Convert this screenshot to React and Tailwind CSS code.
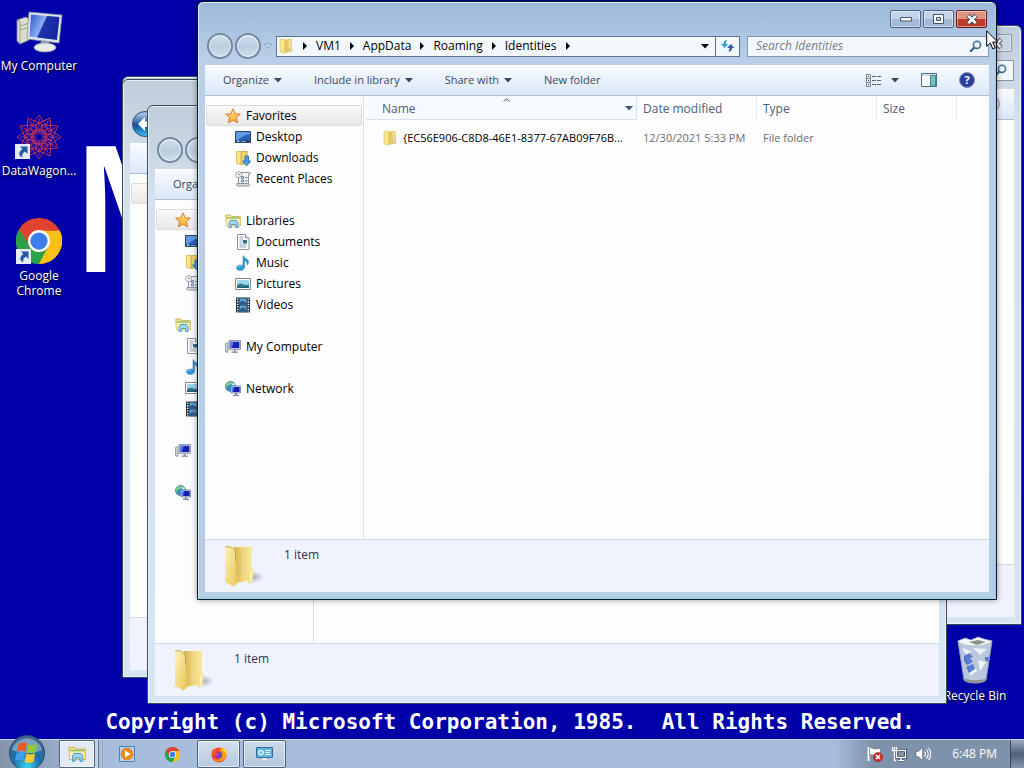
import clsx from 'clsx'

function StarIcon() {
  return (
    <svg width="16" height="16" viewBox="0 0 16 16">
      <defs>
        <linearGradient id="star" x1="0" y1="0" x2="0" y2="1">
          <stop offset="0" stopColor="#ffe9a0" />
          <stop offset="1" stopColor="#f9a51c" />
        </linearGradient>
      </defs>
      <path d="M8 .8l2.100 4.900 5.300.5-4 3.400 1.200 5.200L8 12l-4.600 2.800 1.200-5.200-4-3.400 5.300-.5z" fill="url(#star)" stroke="#d9792b" strokeWidth="1" strokeLinejoin="round" />
    </svg>
  )
}

function DesktopIcon() {
  return (
    <svg width="16" height="16" viewBox="0 0 16 16">
      <path d="M.5 2.500h15v11H.5z" fill="#2a62b4" stroke="#2b4468" />
      <path d="M1 3h14v2C9 6 5 9 1 12z" fill="#5f9be0" />
      <path d="M1 11.500h14V13H1z" fill="#1c3766" />
      <path d="M2 11.500h2.500V13H2zM6 12h5v.7H6z" fill="#8fd0f5" />
    </svg>
  )
}

function FolderIcon({ size = 16 }) {
  return (
    <svg width={size} height={size} viewBox="0 0 16 16">
      <path d="M2 1.200h5l.5 13.300L6 15l-4-1.300z" fill="#f7e58e" stroke="#dcc35d" strokeWidth=".6" />
      <path d="M7.300 2.300l5-.8.7 11.800-6 1z" fill="#e6c961" stroke="#cfae45" strokeWidth=".6" />
      <path d="M9.500 1.600l4 .2.400 11.700-2.800.4z" fill="#f5df84" stroke="#d8bb55" strokeWidth=".5" />
      <path d="M12 9.500h1.300v3.600H12z" fill="#b9d7c2" />
    </svg>
  )
}

function DownloadsIcon() {
  return (
    <svg width="16" height="16" viewBox="0 0 16 16">
      <path d="M1.500 1.500h4.700v13l-4.700-1z" fill="#f8e592" stroke="#d4b047" strokeWidth=".8" />
      <path d="M6.200 1.500h6v12l-6 1z" fill="#f0d06c" stroke="#c9a33c" strokeWidth=".8" />
      <path d="M10 6h3.500v5h2.300L11.700 15.800 7.600 11H10z" fill="#3da2ea" stroke="#1f65ad" strokeWidth=".8" />
    </svg>
  )
}

function RecentIcon() {
  return (
    <svg width="16" height="16" viewBox="0 0 16 16">
      <path d="M5 1.500h10v2H13.500v9H3.500v-8" fill="#f2f4f6" stroke="#8d96a0" />
      <path d="M2 12.500h11.500c1.500 0 1.500 2.500 0 2.500H3c-1.500 0-2-1.500-1-2.500z" fill="#d4d9de" stroke="#8d96a0" />
      <path d="M6.500 5.500h2v2h-2zM6.500 9h2v2h-2zM10 6.500h2.500M10 10h2.500" fill="none" stroke="#6f8197" />
      <circle cx="3.600" cy="3.600" r="3" fill="#fafbfc" stroke="#98a0a8" />
      <path d="M3.600 2v1.800H5" fill="none" stroke="#6a737d" strokeWidth=".8" />
    </svg>
  )
}

function LibraryIcon({ size = 16 }) {
  return (
    <svg width={size} height={size} viewBox="0 0 16 16">
      <path d="M.7 2h5l1 1.500h8.600v9.500H1.500z" fill="#f4df86" stroke="#c9a94a" strokeWidth=".8" />
      <path d="M2 5h12.500" stroke="#5ebd7d" strokeWidth="1" />
      <path d="M1.500 6h13v6.500h-13z" fill="#fbf0b5" />
      <path d="M4 14.500V10l1.500-2.500h6L13 10v4.500h-2.300V11.500H6.300v3z" fill="#9bd6f3" stroke="#3c8fc2" strokeWidth=".8" />
    </svg>
  )
}

function DocumentsIcon() {
  return (
    <svg width="16" height="16" viewBox="0 0 16 16">
      <path d="M2.500.5h8L14 4v11.500H2.500z" fill="#fff" stroke="#8a939c" />
      <path d="M10.500.5V4H14" fill="#e8edf2" stroke="#8a939c" />
      <path d="M4.500 3h4M4.500 5h4M4.500 7h3M4.500 9h2.500M4.500 11h7M4.500 13h7" stroke="#8fa5bd" />
      <path d="M8 6h4v3.500H8z" fill="#2c6f8e" />
    </svg>
  )
}

function MusicIcon() {
  return (
    <svg width="16" height="16" viewBox="0 0 16 16">
      <path d="M8 .5c.5 2.500 5.500 3 5.500 6.500 0 1.500-.8 2.500-1.500 3 .5-2.500-.8-3.800-2.500-4.300V12c0 2-1.800 3.500-4.200 3.500S1.500 14.300 1.500 12.800 3.200 10 5.300 10c1 0 1.900.2 2.700.6z" fill="#2e9bd6" stroke="#1b76ae" strokeWidth=".5" />
      <path d="M3 12.200c.5-1 2-1.400 3-1.200" stroke="#a5dcf6" fill="none" />
    </svg>
  )
}

function PicturesIcon() {
  return (
    <svg width="16" height="16" viewBox="0 0 16 16">
      <path d="M.5 2.500h15v11H.5z" fill="#fff" stroke="#7d8893" />
      <path d="M2 4h12v8H2z" fill="#9fd4ee" />
      <path d="M2 9c3-2 5-1.500 7-.5s3.500.5 5-.5v4H2z" fill="#2f7f88" />
      <path d="M2 10.500h12V12H2z" fill="#1f5d86" />
    </svg>
  )
}

function VideosIcon() {
  return (
    <svg width="16" height="16" viewBox="0 0 16 16">
      <path d="M1 .5h14v15H1z" fill="#22303e" />
      <path d="M4.500 1.500h7v6h-7zM4.500 8.500h7v6h-7z" fill="#5aa9d8" />
      <path d="M4.500 5.500l3-2 4 3v1h-7zM4.500 12.500l4-2.500 3 3v1.500h-7z" fill="#2b5a94" />
      <path d="M8.500 4.500l2 1M7.500 11.500l2 1" stroke="#b04a4a" />
      <path d="M2.700 1.500v14M13.300 1.500v14" stroke="#fff" strokeWidth="1.500" strokeDasharray="1.300 1.300" />
    </svg>
  )
}

function ComputerIcon() {
  return (
    <svg width="16" height="16" viewBox="0 0 16 16">
      <path d="M.5 4.500l2.500-1v10l-2.500-.8z" fill="#cfd5d6" stroke="#7e888c" strokeWidth=".7" />
      <path d="M4 1.500h11.500v8.800H4z" fill="#c7cfe2" stroke="#7a85a5" strokeWidth=".8" />
      <path d="M5.300 2.800h9v6.200h-9z" fill="#1722b8" />
      <path d="M5.300 2.800h3.500l-2 6.200H5.300z" fill="#5f79ea" />
      <path d="M8.500 10.500h2.500v2H13v1.500H6.500v-1.500h2z" fill="#9aa3ad" />
    </svg>
  )
}

function NetworkIcon() {
  return (
    <svg width="16" height="16" viewBox="0 0 16 16">
      <circle cx="5.500" cy="5.500" r="5" fill="#2f93cc" stroke="#1f6a9c" strokeWidth=".6" />
      <path d="M1.500 3c2-2 4-2.500 6-1.500C6.500 3 6 4 3.500 4.500S2 7 2.500 8C1 7 .5 5 1.500 3z" fill="#7ed07a" />
      <path d="M6.500 2.500c1.500-.5 3 0 3.500 1.500L7.500 4.500z" fill="#e1f6ff" />
      <path d="M6 5h9.500v7H6z" fill="#c7d5ee" stroke="#5d6f9c" strokeWidth=".7" />
      <path d="M7 6h7.600v5H7z" fill="#1420ad" />
      <path d="M7 6h2.500L8 11H7z" fill="#5877e6" />
      <path d="M10 12h1.800v1.800H14V15H8v-1.200h2z" fill="#7f8a97" />
    </svg>
  )
}

function LargeFolder() {
  return (
    <svg width="42" height="44" viewBox="0 0 42 44">
      <defs>
        <linearGradient id="folderBack" x1="0" y1="0" x2="1" y2="0">
          <stop offset="0" stopColor="#d2ae48" />
          <stop offset=".4" stopColor="#edd27b" />
          <stop offset="1" stopColor="#f8e89c" />
        </linearGradient>
        <linearGradient id="folderFront" x1="0" y1="0" x2="1" y2="1">
          <stop offset="0" stopColor="#fdf3b8" />
          <stop offset="1" stopColor="#e9c65a" />
        </linearGradient>
        <radialGradient id="folderShade">
          <stop offset="0" stopColor="#8492a5" stopOpacity=".7" />
          <stop offset="1" stopColor="#8492a5" stopOpacity="0" />
        </radialGradient>
      </defs>
      <ellipse cx="31" cy="33" rx="11" ry="6" fill="url(#folderShade)" />
      <path d="M12 3h18v33l-16 3z" fill="url(#folderBack)" />
      <path d="M18 3v34" stroke="#dfc161" />
      <path d="M3 2.500C7 1 12 3 13.500 8l1 32-3 2.500L3 38z" fill="url(#folderFront)" />
      <path d="M3 3c5-1 9 1 10.500 5v9" fill="none" stroke="#b79a48" strokeWidth=".8" />
      <path d="M27 28l3-3 1.500 3-1 10-4 1z" fill="#fff0ae" stroke="#e6cb6c" strokeWidth=".6" />
    </svg>
  )
}

function Triangle({ right, className }) {
  return (
    <svg width="8" height="8" viewBox="0 0 8 8" className={className} fill="currentColor">
      {right ? <path d="M2 0l4 4-4 4z" /> : <path d="M0 2h8L4 6.500z" />}
    </svg>
  )
}

function SearchIcon() {
  return (
    <svg width="13" height="13" viewBox="0 0 13 13" fill="none">
      <circle cx="8" cy="4.800" r="3.600" fill="#e9f5fc" stroke="#3f7096" strokeWidth="1.600" />
      <path d="M5.300 7.500L1.200 11.800" stroke="#2f6593" strokeWidth="2.200" />
    </svg>
  )
}

const navGroups = [
  {
    title: 'Favorites',
    icon: StarIcon,
    items: [
      { label: 'Desktop', icon: DesktopIcon },
      { label: 'Downloads', icon: DownloadsIcon },
      { label: 'Recent Places', icon: RecentIcon },
    ],
  },
  {
    title: 'Libraries',
    icon: LibraryIcon,
    items: [
      { label: 'Documents', icon: DocumentsIcon },
      { label: 'Music', icon: MusicIcon },
      { label: 'Pictures', icon: PicturesIcon },
      { label: 'Videos', icon: VideosIcon },
    ],
  },
  { title: 'My Computer', icon: ComputerIcon, items: [] },
  { title: 'Network', icon: NetworkIcon, items: [] },
]

function CaptionButtons({ active }) {
  const base = 'flex h-[18px] w-[31px] items-center justify-center rounded-xs border shadow-[inset_0_0_0_1px_rgba(255,255,255,0.45)]'
  const plain = active
    ? 'border-[#4d6486] bg-linear-to-b from-[#c3d3e8] from-50% to-[#a3b9d6] to-50%'
    : 'border-[#8796a6] bg-[#c9d6e3]'
  return (
    <div className="flex justify-end gap-0.5 pr-0.5">
      <button className={clsx(base, plain)} aria-label="Minimize">
        <svg width="12" height="6"><path d="M.5 1.500h11v3.500H.5z" fill="#fff" stroke="#4a5568" /></svg>
      </button>
      <button className={clsx(base, plain)} aria-label="Maximize">
        <svg width="11" height="10"><path d="M.5.5h10v9H.5zM3.500 3.500h4v3h-4z" fill="#fff" fillRule="evenodd" stroke="#4a5568" /></svg>
      </button>
      <button
        className={clsx(base, active ? 'border-[#59201f] bg-linear-to-b from-[#dc9384] from-50% to-[#c03d29] to-50%' : plain)}
        aria-label="Close"
      >
        <svg width="14" height="11" viewBox="0 0 14 11">
          <path d="M3 1.500l8 8M11 1.500l-8 8" stroke="#4a4f5c" strokeWidth="4.500" />
          <path d="M3.300 1.800l7.400 7.400M10.700 1.800L3.300 9.200" stroke="#fff" strokeWidth="2.600" />
        </svg>
      </button>
    </div>
  )
}

function TravelButtons({ canGoBack }) {
  const disabled = 'size-[26px] rounded-full border-2 border-[#7388a0] bg-linear-to-b from-[#d3e0ec] via-[#bccddf] to-[#cddcea] shadow-[inset_0_0_0_1px_rgba(255,255,255,0.6)]'
  return (
    <div className="flex items-center gap-0.5 pl-0.5">
      {canGoBack ? (
        <button className="flex size-[26px] items-center justify-center rounded-full border border-[#2f4c70] bg-linear-to-b from-[#9cc0e2] from-10% via-[#14509a] via-55% to-[#35c3ee]" aria-label="Back">
          <svg width="16" height="14" viewBox="0 0 16 14"><path d="M8 0L1 7l7 7v-4h7V4.500H8z" fill="#fff" /></svg>
        </button>
      ) : (
        <button className={disabled} aria-label="Back" />
      )}
      <button className={disabled} aria-label="Forward" />
      <button className="pr-1 pl-px text-[#86a1bf]" aria-label="Recent pages">
        <svg width="8" height="6" viewBox="0 0 8 6"><path d="M.5 1h7L4 5z" fill="#d5e3ef" stroke="currentColor" /></svg>
      </button>
    </div>
  )
}

function AddressBar({ path }) {
  return (
    <div className="flex h-[21px] min-w-0 flex-1 items-stretch border border-[#5b7391] bg-[#f3f8fd] text-black">
      <div className="flex min-w-0 flex-1 items-center pl-px">
        <FolderIcon />
        <Triangle right className="ml-[7px]" />
        {path.map((part) => (
          <div key={part} className="flex items-center">
            <button className="px-[7px]">{part}</button>
            <Triangle right />
          </div>
        ))}
      </div>
      <button className="px-1.5" aria-label="Previous locations"><Triangle /></button>
      <button className="flex w-6 items-center justify-center border-l border-[#5b7391]" aria-label="Refresh">
        <svg width="15" height="14" viewBox="0 0 15 14">
          <path d="M7 1C4.500 1 3.500 2.500 3.500 5H1l3.700 4L8.300 5H6c0-1.500.2-2.500 1-4z" fill="#3e9fdc" />
          <path d="M8.500 13c2.500-.2 3.500-1.800 3.500-4h2.300L10.800 5 7.200 9h2.300c0 1.500-.2 2.800-1 4z" fill="#2e5fae" />
        </svg>
      </button>
    </div>
  )
}

function Toolbar({ active, actions }) {
  return (
    <div className="flex h-[31px] shrink-0 items-center gap-8 border-b border-[#a9bdd6] bg-linear-to-b from-[#fafcff] via-[#e9f1fb] via-50% to-[#dde8f6] pr-[14px] pl-[18px] text-[11px] text-[#3b4760] shadow-[inset_0_1px_0_#fff]">
      {actions.map(({ label, menu }) => (
        <button key={label} className="flex items-center gap-[5px]">
          {label} {menu && <Triangle />}
        </button>
      ))}
      <div className="ml-auto flex items-center gap-[22px]">
        <button className="flex items-center gap-[9px]" aria-label="Change your view">
          <svg width="16" height="13" viewBox="0 0 16 13" fill="none">
            <path d="M.5.500h4v12h-4zM.5 4.500h4M.5 8.500h4" stroke="#7d8894" />
            <path d="M6 2.500h4M11 2.500h4M6 6.500h4M11 6.500h4M6 10.500h4M11 10.500h4" stroke="#5b6672" />
            <path d="M2 2.500h1M2 6.500h1M2 10.500h1" stroke="#2b3440" />
          </svg>
          <Triangle />
        </button>
        <button aria-label="Show the preview pane">
          <svg width="16" height="14" viewBox="0 0 16 14">
            <path d="M.5.500h15v13H.5z" fill="#fff" stroke="#4c6f86" />
            <path d="M1 1h14v2H1z" fill="#cfe0ec" />
            <path d="M9.500 2.500h5v10.500h-5z" fill="#6fc3c4" stroke="#3d8791" />
          </svg>
        </button>
        <button
          className={clsx('flex size-4 items-center justify-center rounded-full border font-bold text-white', active ? 'border-[#7f8cb4] bg-[#2a409c]' : 'border-[#8b97a5] bg-[#d5dee9]')}
          aria-label="Help"
        >
          {active && '?'}
        </button>
      </div>
    </div>
  )
}

function NavPane({ compact }) {
  return (
    <nav className="flex w-[159px] shrink-0 flex-col gap-[21px] border-r border-[#d3dfee] pt-[9px] pr-px pl-px">
      {navGroups.map((group, index) => {
        const GroupIcon = group.icon
        return (
          <ul key={group.title}>
            <li className={clsx('flex h-[21px] items-center gap-[5px] pl-[18px]', index === 0 ? 'rounded-xs border border-[#dcdcdc] bg-linear-to-b from-[#fafafa] to-[#e8e8e8]' : 'ml-px')}>
              <GroupIcon />
              {!compact && group.title}
            </li>
            {group.items.map(({ label, icon: Icon }) => (
              <li key={label} className="flex h-[21px] items-center gap-[5px] pl-[29px]">
                <Icon />
                {!compact && label}
              </li>
            ))}
          </ul>
        )
      })}
    </nav>
  )
}

function FileTable({ files }) {
  const head = 'border-r border-[#e3ebf5] pt-0.5 pl-[6px] text-left font-normal'
  return (
    <table className="mr-8 ml-0.5 w-[591px] table-fixed border-separate border-spacing-0 self-start text-[#4c607a]">
      <thead>
        <tr>
          <th className="relative h-6 w-[271px] border-r border-b border-[#d5e1f0] bg-[#f7fafe] pt-0.5 pl-4 text-left font-normal">
            Name
            <svg width="7" height="4" className="absolute top-0.5 left-[137px]"><path d="M.5 3.500l3-3 3 3" fill="#c6dcea" stroke="#5c7690" /></svg>
            <Triangle className="absolute top-2 right-[3px] text-[#3f5875]" />
          </th>
          <th className={clsx(head, 'w-[120px]')}>Date modified</th>
          <th className={clsx(head, 'w-[120px]')}>Type</th>
          <th className={clsx(head, 'w-20')}>Size</th>
        </tr>
      </thead>
      <tbody>
        {files.map((file) => (
          <tr key={file.name} className="text-[11px] text-[#6d6d6d]">
            <td className="h-9 pl-4 text-black">
              <div className="flex items-center gap-[5px] whitespace-nowrap"><span className="shrink-0"><FolderIcon /></span>{file.name}</div>
            </td>
            <td className="pl-[6px] whitespace-nowrap">{file.modified}</td>
            <td className="pl-[6px]">{file.type}</td>
            <td />
          </tr>
        ))}
      </tbody>
    </table>
  )
}

function ExplorerWindow({ className, active, canGoBack, showNav, status, path = [], actions = [], files = [] }) {
  return (
    <section
      className={clsx(
        'absolute flex flex-col rounded-t-md border px-[7px] pt-2 pb-[7px]',
        active
          ? 'border-[#10151d] bg-linear-to-b from-[#9cb8d9] via-[#bad0e9] via-10% to-[#b4cce4] shadow-[inset_-1px_-1px_0_#7fdcf3,inset_1px_1px_0_#d8ecfa,0_0_6px_rgba(0,0,0,0.4)]'
          : 'border-[#3d4a58] bg-linear-to-b from-[#c0cdda] via-[#d5e1ec] via-15% to-[#d7e4f2] shadow-[inset_0_0_0_1px_#e9f1f8]',
        className,
      )}
    >
      <CaptionButtons active={active} />
      <div className="flex items-center gap-[7px] pt-[5px] pb-1.5">
        <div className="flex min-w-0 flex-1 items-center">
          <TravelButtons canGoBack={canGoBack} />
          <AddressBar path={path} />
        </div>
        <div className="flex h-[21px] w-[242px] items-center border border-[#8496ad] bg-[#f3f8fd] pr-1.5 pl-2">
          <input
            type="text"
            aria-label="Search folder"
            placeholder={active ? 'Search Identities' : ''}
            className="min-w-0 flex-1 italic outline-none placeholder:text-[#767c85]"
          />
          <SearchIcon />
        </div>
      </div>
      <div className="flex min-h-0 flex-1 flex-col bg-[#fdfdfe]">
        <Toolbar active={active} actions={actions} />
        <div className="flex min-h-0 flex-1 overflow-hidden">
          {showNav ? (
            <NavPane compact={!active} />
          ) : (
            <div className="mt-[9px] ml-px h-[21px] w-[156px] rounded-xs border border-[#dcdcdc] bg-linear-to-b from-[#fafafa] to-[#e8e8e8]" />
          )}
          {files.length > 0 && <FileTable files={files} />}
        </div>
        <footer className="flex h-[53px] shrink-0 gap-[20px] border-t border-[#ccd9ea] bg-[#f0f3fd] pt-1 pl-[17px] text-[#2c3450]">
          {status && (
            <>
              <LargeFolder />
              <span className="pt-[3px]">{status}</span>
            </>
          )}
        </footer>
      </div>
    </section>
  )
}

function ChromeIcon({ size }) {
  return (
    <svg width={size} height={size} viewBox="0 0 48 48">
      <path d="M24 24L3.200 12A24 24 0 0 1 44.800 12z" fill="#e1412f" />
      <path d="M24 24L44.800 12A24 24 0 0 1 24 48z" fill="#fbc116" />
      <path d="M24 24L24 48A24 24 0 0 1 3.200 12z" fill="#2da04c" />
      <path d="M24 13h20.500l.3-1A24 24 0 0 1 24 48l9.500-18.500z" fill="#fbc116" />
      <path d="M3.200 12A24 24 0 0 1 44.800 13H24L14.500 30z" fill="#e1412f" />
      <path d="M3.200 12L14.500 29.500 24 35l9.500-5L24 48A24 24 0 0 1 3.200 12z" fill="#2da04c" />
      <circle cx="24" cy="24" r="11.500" fill="#fff" />
      <circle cx="24" cy="24" r="9" fill="#3b7de9" />
    </svg>
  )
}

function MyComputerArt() {
  return (
    <svg width="48" height="44" viewBox="0 0 48 44">
      <defs>
        <linearGradient id="screen" x1="0" y1="0" x2="1" y2=".4">
          <stop offset="0" stopColor="#2b55c8" />
          <stop offset=".5" stopColor="#8db0f2" />
          <stop offset=".55" stopColor="#1c33a8" />
          <stop offset="1" stopColor="#1426a0" />
        </linearGradient>
      </defs>
      <path d="M2 10l9-3 3 2v21l-9 4-3-3z" fill="#d9dccf" stroke="#83897d" strokeWidth=".8" />
      <path d="M2 10l3 1.500V34M5 16l8-2.500M5 20l8-2.500" fill="none" stroke="#9ca294" />
      <path d="M14 2l33 3-3 28-32-4z" fill="#dfe4ea" stroke="#8791a0" strokeWidth=".8" />
      <path d="M16 4.500l28.500 2.600-2.500 23-27.500-3.500z" fill="url(#screen)" />
      <path d="M26 31l8 1v4h-9z" fill="#aab3bb" />
      <ellipse cx="30" cy="37.500" rx="11" ry="4.500" fill="#e9ecea" stroke="#8e9791" strokeWidth=".8" />
    </svg>
  )
}

const spokes = [0, 30, 60, 90, 120, 150, 180, 210, 240, 270, 300, 330]

function DataWagonArt() {
  return (
    <svg width="48" height="44" viewBox="0 0 48 44" fill="none" stroke="#d03a50">
      {spokes.map((angle) => (
        <g key={angle} transform={`rotate(${angle} 24 22)`}>
          <path d="M24 0L33 13M24 0L15 13M24 3v9M15 13c3 4 15 4 18 0" strokeWidth=".8" />
          <ellipse cx="24" cy="14" rx="3" ry="4.500" strokeWidth=".6" stroke="#a82f70" />
        </g>
      ))}
      <circle cx="24" cy="22" r="8" strokeWidth=".6" stroke="#b62f62" />
    </svg>
  )
}

function RecycleBinArt() {
  return (
    <svg width="40" height="48" viewBox="0 0 40 48">
      <path d="M3 5h34l-6 39c-3 4-19 4-22 0z" fill="#c8d6e2" fillOpacity=".93" stroke="#8ea1b5" />
      <path d="M3 5l7-3 6 2 7-3 6 2 8 2c-3 6-31 7-34 0z" fill="#f3f6f8" stroke="#a9b6c2" strokeWidth=".7" />
      <path d="M14 6l9-2 8 2-9 3z" fill="#8b9188" />
      <path d="M7 12l9 3-5 8 7 6zM18 12l7 7 7-6zM23 24l8 2-6 9zM15 31l8 3-8 6z" fill="#edf2f6" />
      <path d="M9 20l5-3 4 4-3 1 3 4-6 3-3-4zM11 31l7-3 2 5-6 4zM30 21h4l-1 5-3-2z" fill="#3c64c8" fillOpacity=".8" />
      <path d="M9 42c4 3 18 3 22 0l-.5 2.500c-4 2.500-17 2.500-21 0z" fill="#8e948c" />
    </svg>
  )
}

function DesktopShortcut({ className, label, shortcut, children }) {
  return (
    <button className={clsx('absolute flex w-[78px] flex-col items-center gap-1 text-white [text-shadow:1px_1px_2px_#000]', className)}>
      <span className="relative">
        {children}
        {shortcut && (
          <svg width="15" height="15" viewBox="0 0 15 15" className="absolute bottom-0 left-0">
            <path d="M0 0h15v15H0z" fill="#e4ebf3" />
            <path d="M5 2.500h7.500V10L10 7.500C7.500 9 6.500 11 7.500 13.500 3.500 12 3 8 7.300 5z" fill="#2457a8" />
          </svg>
        )}
      </span>
      <span className="text-center leading-[15px]">{label}</span>
    </button>
  )
}

function StartButton() {
  return (
    <button className="relative z-10 -mt-[6px] ml-2" aria-label="Start">
      <svg width="38" height="36" viewBox="0 0 38 36">
        <defs>
          <radialGradient id="orb" cx=".5" cy=".9" r=".9">
            <stop offset="0" stopColor="#3fd4f4" />
            <stop offset=".45" stopColor="#1b6fa8" />
            <stop offset="1" stopColor="#49698c" />
          </radialGradient>
        </defs>
        <circle cx="19" cy="19" r="17.500" fill="url(#orb)" stroke="#29496d" />
        <path d="M4 16a15.500 15.500 0 0 1 30 0c-8 4-20 4-30 0z" fill="#cfe0ee" fillOpacity=".45" />
        <path d="M10.500 10c3-2 6-1.800 8.500-.3l-1.700 8c-3-1.500-5.500-1.500-8.500 0z" fill="#ea5a26" />
        <path d="M20.300 10.300c3 1.500 6 1.300 9-.3l-1.800 8.200c-3 1.300-6 1.300-8.900 0z" fill="#8fca3a" />
        <path d="M8.500 19c3-1.500 5.800-1.500 8.500 0l-1.700 8c-2.800-1.500-5.500-1.500-8.500 0z" fill="#3f9fe8" />
        <path d="M18.300 19.600c3 1.300 6 1.300 8.900 0L25.500 28c-3 1.300-6 1.300-8.900-.3z" fill="#fdc832" />
      </svg>
    </button>
  )
}

function Taskbar() {
  const open = 'flex items-center justify-center rounded-xs border border-[#4d627f] shadow-[inset_0_0_0_1px_rgba(255,255,255,0.6)]'
  return (
    <footer className="absolute inset-x-0 bottom-0 flex h-[29px] items-stretch border-t border-[#cbd9ea] bg-linear-to-r from-[#8494ab] via-[#a6bedc] via-10% to-[#a6bedc] text-white">
      <StartButton />
      <button className={clsx(open, 'ml-[13px] w-9 bg-[#e3eaf3]')} aria-label="Windows Explorer"><LibraryIcon size={18} /></button>
      <span className="w-1 border-r border-[#5f7390] bg-[#c5d3e5]" />
      <span className="w-1 border-r border-[#8fa3be]" />
      <button className="ml-3.5 flex items-center px-0.5" aria-label="Windows Media Player">
        <svg width="16" height="16" viewBox="0 0 16 16">
          <path d="M.5.500h15v15H.5z" fill="#b9d6ef" stroke="#4c7fb5" />
          <circle cx="8" cy="8" r="6" fill="#f08a1c" stroke="#c96c12" strokeWidth=".6" />
          <path d="M6 4.500l5.500 3.500L6 11.500z" fill="#fff" />
        </svg>
      </button>
      <button className="ml-[27px] flex items-center px-px" aria-label="Google Chrome"><ChromeIcon size={15} /></button>
      <button className={clsx(open, 'ml-4 w-[43px] bg-linear-to-b from-[#d3dfed] to-[#b7c9df]')} aria-label="Firefox">
        <svg width="18" height="17" viewBox="0 0 18 17">
          <circle cx="9" cy="9" r="7.500" fill="#f4452f" />
          <path d="M12 1c5 3 6.500 8 3 12-3 3-9 3.500-12 0 5 2 9 0 9-4 0-3-2-4-3-5z" fill="#ff9a1f" />
          <path d="M12 1c4 2 5.500 5 5 8-1-2.500-3-3.500-4-4z" fill="#ffd83b" />
          <circle cx="8.500" cy="9" r="3.500" fill="#7a3fc0" />
          <path d="M1.500 8C1.500 5 3 4 4 2.500c.5 1.500 2 2 4 2.500-2 .5-2 2-1 2.500H9.500L7 9.500z" fill="#f7532f" />
        </svg>
      </button>
      <button className={clsx(open, 'ml-[3px] w-[43px] bg-linear-to-b from-[#cddaea] to-[#b5c7de]')} aria-label="System settings">
        <svg width="17" height="15" viewBox="0 0 17 15">
          <path d="M.5.500h16v10H.5z" fill="#5fb4dc" stroke="#2f6f9c" />
          <circle cx="5" cy="5.500" r="2.200" fill="none" stroke="#fff" strokeWidth="1.200" />
          <path d="M9.500 3.500h5M9.500 5.500h4M9.500 7.500h5" stroke="#fff" />
          <path d="M6 11h5l1.500 3h-8z" fill="#eef3f7" stroke="#8b9bab" strokeWidth=".6" />
        </svg>
      </button>
      <div className="ml-auto flex items-center gap-2 bg-linear-to-r from-transparent to-[#7f92ac] to-20% pl-[33px]">
        <svg width="16" height="16" viewBox="0 0 16 16">
          <path d="M1.500 1v14" stroke="#fff" strokeWidth="1.800" />
          <path d="M2.500 2c3-1 4 1.500 6 1s2.500-.5 5 0v6c-3-.5-4 .5-6 .3s-3-1-5-.3z" fill="#fff" stroke="#4a566b" strokeWidth=".5" />
          <circle cx="11" cy="11" r="4.600" fill="#d02d2d" stroke="#8b1414" strokeWidth=".5" />
          <path d="M9 9l4 4M13 9l-4 4" stroke="#fff" strokeWidth="1.500" />
        </svg>
        <svg width="16" height="16" viewBox="0 0 16 16" fill="none">
          <path d="M5.500 4.500h9v7h-9zM10 12v2M7 14.500h6" stroke="#2f3d51" strokeWidth="3" />
          <path d="M5.500 4.500h9v7h-9zM10 12v2M7 14.500h6M1.500 1v3.500h4V1M3.500 1v3M3.500 4.500v10H5" stroke="#fff" strokeWidth="1.300" />
        </svg>
        <svg width="16" height="16" viewBox="0 0 16 16" fill="none">
          <path d="M1 5.500h2.500L7.500 1.500v13l-4-4H1z" fill="#fff" stroke="#4a566b" strokeWidth=".5" />
          <path d="M9.500 5.500c1.200 1.500 1.200 3.500 0 5M11.500 3.500c2.300 2.500 2.300 6.500 0 9M13.500 2c3 3.500 3 8.500 0 12" stroke="#fff" strokeWidth="1.100" />
        </svg>
        <time className="pr-[5px] pl-[13px] whitespace-nowrap">6:48 PM</time>
        <button className="h-full w-[14px] border-l border-[#36465c] bg-linear-to-b from-[#9dabbd] via-[#4f627c] to-[#8697ac]" aria-label="Show desktop" />
      </div>
    </footer>
  )
}

const actions = [
  { label: 'Organize', menu: true },
  { label: 'Include in library', menu: true },
  { label: 'Share with', menu: true },
  { label: 'New folder' },
]

const files = [
  { name: '{EC56E906-C8D8-46E1-8377-67AB09F76B...', modified: '12/30/2021 5:33 PM', type: 'File folder' },
]

export default function App() {
  return (
    <main className="relative h-screen overflow-hidden bg-[#0000a8] font-['Open_Sans','Noto_Sans',sans-serif] text-xs leading-4">
      <div className="absolute top-[84px] left-[70px] font-['Open_Sans',sans-serif] text-[176px] leading-[240px] font-semibold text-white" aria-hidden="true">M</div>
      <p className="absolute inset-x-0 bottom-8 pr-1 text-center font-['DejaVu_Sans_Mono',monospace] text-[21px] leading-7 font-bold whitespace-pre text-white">
        {'Copyright (c) Microsoft Corporation, 1985.  All Rights Reserved.'}
      </p>

      <DesktopShortcut className="top-[10px] left-0" label="My Computer"><MyComputerArt /></DesktopShortcut>
      <DesktopShortcut className="top-[115px] left-0" label="DataWagon..." shortcut><DataWagonArt /></DesktopShortcut>
      <DesktopShortcut className="top-[218px] left-0" label={<>Google<br />Chrome</>} shortcut><ChromeIcon size={46} /></DesktopShortcut>
      <DesktopShortcut className="right-[10px] bottom-[65px]" label="Recycle Bin"><RecycleBinArt /></DesktopShortcut>

      <ExplorerWindow className="top-[25px] right-[2px] bottom-[143px] left-[222px]" />
      <ExplorerWindow className="top-[76px] right-[102px] bottom-[93px] left-[122px]" />
      <ExplorerWindow className="top-[79px] right-[102px] bottom-[90px] left-[122px]" canGoBack />
      <ExplorerWindow
        className="top-[105px] right-[77px] bottom-[64px] left-[147px]"
        showNav
        status="1 item"
        actions={actions.slice(0, 1)}
      />
      <ExplorerWindow
        className="top-px right-[27px] bottom-[168px] left-[197px]"
        active
        showNav
        status="1 item"
        path={['VM1', 'AppData', 'Roaming', 'Identities']}
        actions={actions}
        files={files}
      />

      <Taskbar />
      <svg width="13" height="20" viewBox="0 0 13 20" className="absolute top-[30px] right-[25px]">
        <path d="M.7.900v15.500l3.600-3.400 2.500 5.800 2.400-1-2.500-5.700h5z" fill="#fff" stroke="#000" />
      </svg>
    </main>
  )
}
